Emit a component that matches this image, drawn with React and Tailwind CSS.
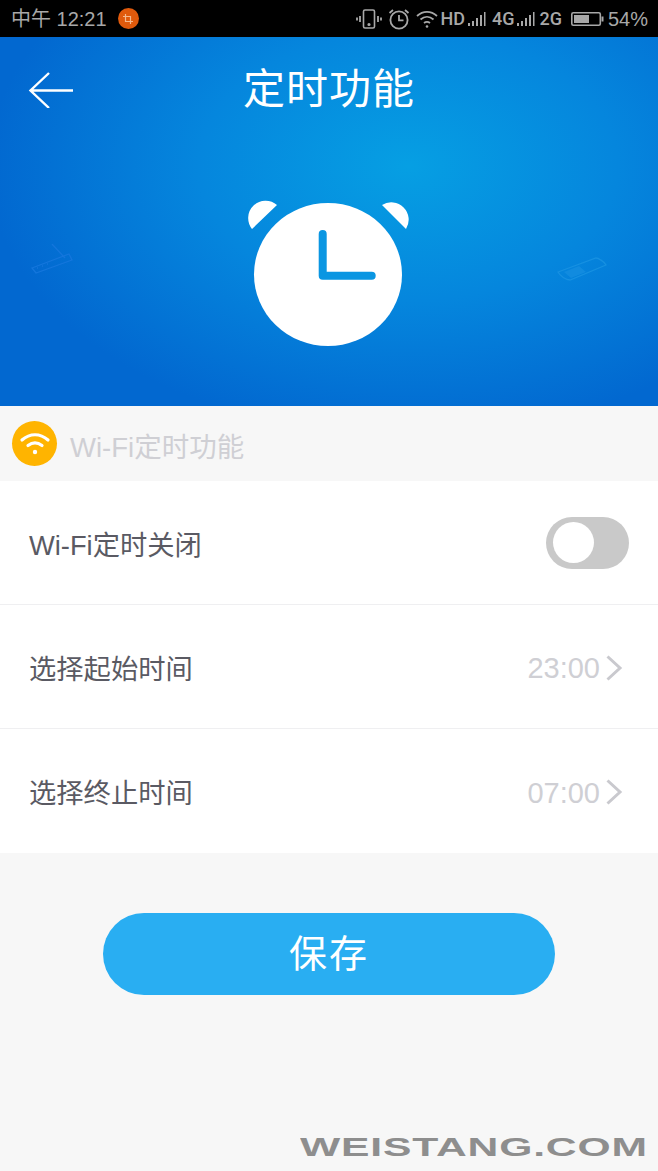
const cjk = "font-['Liberation_Sans','Noto_Sans_CJK_SC',sans-serif]";

function StatusIcons() {
  return (
    <div className="flex items-center text-[#a8a8a8]">
      <svg width="28" height="24" viewBox="0 0 28 24" fill="none" stroke="currentColor" strokeWidth="1.600" className="mr-[4px]">
        <rect x="8.500" y="3" width="11" height="18" rx="1.500" />
        <circle cx="14" cy="17.500" r="0.800" fill="currentColor" />
        <path d="M5 9v6M2 10.500v3M23 9v6M26 10.500v3" strokeWidth="1.800" />
      </svg>
      <svg width="24" height="24" viewBox="0 0 24 24" fill="none" stroke="currentColor" strokeWidth="1.800" className="mr-[4px]">
        <circle cx="12" cy="13" r="8.600" />
        <path d="M12 8v5.400h4.500M2.500 6l3.500-3M21.500 6L18 3" />
      </svg>
      <svg width="24" height="20" viewBox="0 0 24 20" fill="none" stroke="currentColor" strokeWidth="1.800" className="mr-[1px]">
        <path d="M2 7c6-5.500 14-5.500 20 0M5.500 10.500c4-3.500 9-3.500 13 0M9 14c2-1.500 4-1.500 6 0" />
        <circle cx="12" cy="17.500" r="1.300" fill="currentColor" stroke="none" />
      </svg>
      <span className="font-['Roboto',sans-serif] text-[18px] font-medium leading-none">HD</span>
      <Bars />
      <span className="ml-[5px] font-['Roboto',sans-serif] text-[18px] font-medium leading-none">4G</span>
      <Bars />
      <span className="ml-[3px] font-['Roboto',sans-serif] text-[18px] font-medium leading-none">2G</span>
      <svg width="34" height="16" viewBox="0 0 34 16" fill="none" className="ml-[9px]">
        <rect x="0.800" y="1.800" width="28.500" height="12.400" rx="1.500" stroke="currentColor" strokeWidth="1.600" />
        <rect x="3" y="4" width="15" height="8" fill="currentColor" />
        <rect x="30.500" y="5.500" width="2" height="5" fill="currentColor" />
      </svg>
      <span className="ml-[3px] text-[20px] leading-none">54%</span>
    </div>
  );
}

function Bars() {
  return (
    <svg width="20" height="18" viewBox="0 0 20 18" fill="currentColor" className="ml-[2px]">
      <rect x="1" y="13" width="2" height="3" />
      <rect x="5" y="11" width="2" height="5" />
      <rect x="9" y="8" width="2" height="8" />
      <rect x="13" y="5" width="2" height="11" />
      <rect x="17" y="2" width="1.500" height="14" />
    </svg>
  );
}

function Chevron() {
  return (
    <svg width="18" height="26" viewBox="0 0 18 26" fill="none" stroke="#c9c9ce" strokeWidth="3" className="ml-[5px] -translate-y-[1px]">
      <path d="M2.500 1.500L15 13L2.500 24.500" />
    </svg>
  );
}

function Row({ label, children, border }) {
  return (
    <div className={`flex h-[124px] items-center justify-between pl-[29px] pr-[35px] ${border ? "border-b border-[#efeff1]" : ""}`}>
      <span className="pt-[6px] text-[27.3px] leading-none text-[#5a5a63]">{label}</span>
      {children}
    </div>
  );
}

export default function App() {
  return (
    <div className={`relative flex h-[1171px] w-[658px] flex-col overflow-hidden bg-[#f7f7f7] ${cjk}`}>
      <div className="flex h-[37px] shrink-0 items-center justify-between bg-black pl-[11px] pr-[10px]">
        <div className="flex items-center text-[#a8a8a8]">
          <span className="text-[20px] leading-none">中午 12:21</span>
          <span className="ml-[11px] flex h-[21px] w-[21px] items-center justify-center rounded-full bg-[#e05a0c]">
            <svg width="10" height="10" viewBox="0 0 10 10" fill="none" stroke="#f5b98e" strokeWidth="1.200">
              <path d="M2.500 0v7.500H10M0 2.500h7.500V10" />
            </svg>
          </span>
        </div>
        <StatusIcons />
      </div>

      <div className="relative h-[369px] shrink-0 bg-[radial-gradient(ellipse_420px_270px_at_62%_35%,#069fe3_0%,#0586dd_50%,#0268d0_100%)]">
        <div className="flex h-[106px] items-center justify-center">
          <span className="text-[42px] leading-none tracking-[1px] text-white">定时功能</span>
        </div>
        <svg width="46" height="36" viewBox="0 0 46 36" fill="none" stroke="#fff" strokeWidth="2.400" className="absolute left-[28px] top-[35px]">
          <path d="M45 18.500H2.500M21 1L2.500 18.500L21 36" />
        </svg>
        <svg width="166" height="150" viewBox="0 0 166 150" className="mx-auto mt-[57px] block">
          <ellipse cx="82" cy="74.500" rx="74" ry="71.500" fill="#fff" />
          <path d="M6 29L31 5A17.400 17.400 0 0 0 6 29z" fill="#fff" />
          <path d="M160 29L136 5A17.400 17.400 0 0 1 160 29z" fill="#fff" />
          <path d="M76.700 34v41.700h49" fill="none" stroke="#0a96e2" strokeWidth="8" strokeLinecap="round" strokeLinejoin="round" />
        </svg>
        <svg width="50" height="36" viewBox="0 0 50 36" fill="none" stroke="#1476dc" strokeWidth="1.300" className="absolute left-[30px] top-[207px]">
          <path d="M2 24l37-14 3 6-36 13zM22 0l13 14" />
          <path d="M7 24h1M12 22h1M17 20h1" />
        </svg>
        <svg width="54" height="28" viewBox="0 0 54 28" fill="none" stroke="#1690e1" strokeWidth="1.300" className="absolute left-[555px] top-[219px]">
          <path d="M3 16L41 2c2 0 9 4 10 7L15 24C11 24 5 20 3 16z" />
          <path d="M9 16L24 10l7 6-15 6z" fill="#118bdf" stroke="none" />
        </svg>
      </div>

      <div className="flex h-[75px] shrink-0 items-center pl-[12px]">
        <span className="flex h-[45px] w-[45px] items-center justify-center rounded-full bg-[#ffb400]">
          <svg width="32" height="28" viewBox="0 0 32 28" fill="none" stroke="#fff" strokeWidth="3.200" strokeLinecap="round">
            <path d="M3 10c8-7 18-7 26 0M9 15.500c4.500-3.500 9.500-3.500 14 0" />
            <circle cx="16" cy="22" r="2.200" fill="#fff" stroke="none" />
          </svg>
        </span>
        <span className="ml-[13px] pt-[8px] text-[27.500px] leading-none text-[#cfcfd4]">Wi-Fi定时功能</span>
      </div>

      <div className="shrink-0 bg-white">
        <Row label="Wi-Fi定时关闭" border>
          <span className="-mr-[6px] flex h-[52px] w-[83px] items-center rounded-full bg-[#c9c9c9] pl-[7px]">
            <span className="h-[41px] w-[41px] rounded-full bg-white" />
          </span>
        </Row>
        <Row label="选择起始时间" border>
          <span className="flex items-center pt-[4px] text-[29px] leading-none text-[#cfcfd4]">23:00<Chevron /></span>
        </Row>
        <Row label="选择终止时间">
          <span className="flex items-center pt-[4px] text-[29px] leading-none text-[#cfcfd4]">07:00<Chevron /></span>
        </Row>
      </div>

      <div className="mx-[103px] mt-[60px] flex h-[82px] items-center justify-center rounded-full bg-[#29aef2]">
        <span className="text-[38px] leading-none tracking-[2px] text-white">保存</span>
      </div>

      <span className="absolute left-[300px] top-[1132px] origin-left scale-x-[1.64] font-['Liberation_Sans',sans-serif] text-[26px] font-bold leading-[30px] tracking-[0.5px] text-[#8e8e8e]">WEISTANG.COM</span>
    </div>
  );
}
